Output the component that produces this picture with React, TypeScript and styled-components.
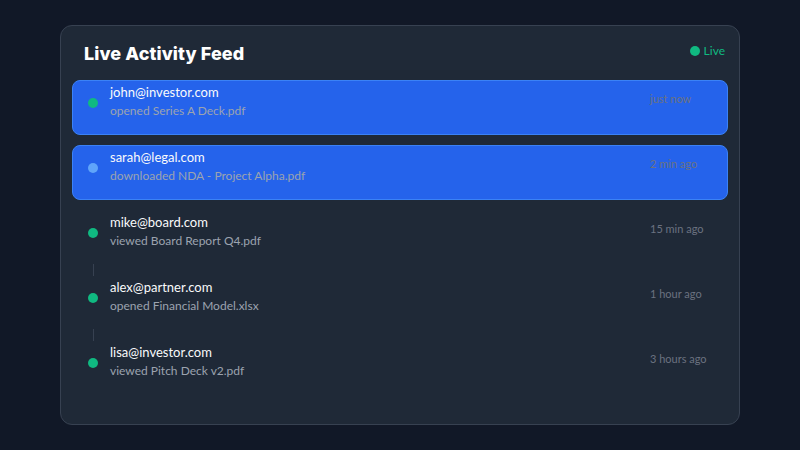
import React from "react";
import styled, { createGlobalStyle } from "styled-components";

const GlobalStyle = createGlobalStyle`
  html, body {
    margin: 0;
    padding: 0;
    background: #111827;
  }
  body {
    width: 800px;
    height: 450px;
    overflow: hidden;
    font-family: "Lato", "Liberation Sans", sans-serif;
  }
  * { box-sizing: border-box; }
`;

const Page = styled.div`
  width: 800px;
  height: 450px;
  padding-top: 25px;
  display: flex;
  justify-content: center;
  align-items: flex-start;
`;

const Card = styled.section`
  width: 680px;
  height: 400px;
  background: #1f2937;
  border: 1px solid #374151;
  border-radius: 12px;
  padding: 0 11px;
  display: flex;
  flex-direction: column;
`;

const Header = styled.header`
  height: 54px;
  padding: 17px 3px 0 12px;
  display: flex;
  justify-content: space-between;
  align-items: flex-start;
`;

const Title = styled.h2`
  margin: 0;
  font-family: "Inter", "Noto Sans", sans-serif;
  font-weight: 800;
  font-size: 18px;
  line-height: 22px;
  color: #ffffff;
  letter-spacing: 0.1px;
`;

const LiveBadge = styled.div`
  display: flex;
  align-items: center;
  gap: 4px;
  font-size: 12px;
  line-height: 16px;
  color: #10b981;
`;

const Dot = styled.span<{ $color: string; $size?: number }>`
  flex: none;
  display: block;
  width: ${(p) => p.$size ?? 10}px;
  height: ${(p) => p.$size ?? 10}px;
  border-radius: 50%;
  background: ${(p) => p.$color};
`;

const List = styled.ul`
  list-style: none;
  margin: 0;
  padding: 0;
  display: flex;
  flex-direction: column;
  gap: 10px;
`;

const Row = styled.li<{ $active: boolean; $connector: boolean }>`
  position: relative;
  height: 55px;
  display: flex;
  align-items: flex-start;
  padding: 4px 16px 0 15px;
  border-radius: 8px;
  border: 1px solid ${(p) => (p.$active ? "#3b82f6" : "transparent")};
  background: ${(p) => (p.$active ? "#2563eb" : "transparent")};

  &::after {
    content: "";
    display: ${(p) => (p.$connector ? "block" : "none")};
    position: absolute;
    left: 20px;
    top: 100%;
    width: 1px;
    height: 12px;
    background: #374151;
  }
`;

const RowDot = styled(Dot)`
  margin-top: 13px;
`;

const Info = styled.div`
  flex: 1;
  margin-left: 12px;
  display: flex;
  flex-direction: column;
`;

const Email = styled.div`
  font-size: 13px;
  line-height: 1.2;
  color: #f9fafb;
`;

const Action = styled.div`
  margin-top: 3px;
  font-size: 12px;
  line-height: 1.2;
  color: #9ca3af;
`;

const Time = styled.div`
  width: 61px;
  margin-top: 7px;
  font-size: 11px;
  line-height: 1.2;
  color: #6b7280;
  white-space: nowrap;
`;

type Item = { email: string; action: string; time: string; dot: string; active: boolean };

const items: Item[] = [
  { email: "john@investor.com", action: "opened Series A Deck.pdf", time: "just now", dot: "#10b981", active: true },
  { email: "sarah@legal.com", action: "downloaded NDA - Project Alpha.pdf", time: "2 min ago", dot: "#60a5fa", active: true },
  { email: "mike@board.com", action: "viewed Board Report Q4.pdf", time: "15 min ago", dot: "#10b981", active: false },
  { email: "alex@partner.com", action: "opened Financial Model.xlsx", time: "1 hour ago", dot: "#10b981", active: false },
  { email: "lisa@investor.com", action: "viewed Pitch Deck v2.pdf", time: "3 hours ago", dot: "#10b981", active: false },
];

export default function App() {
  return (
    <>
      <GlobalStyle />
      <Page>
        <Card>
          <Header>
            <Title>Live Activity Feed</Title>
            <LiveBadge>
              <Dot $color="#10b981" />
              Live
            </LiveBadge>
          </Header>
          <List>
            {items.map((it, i) => (
              <Row key={it.email} $active={it.active} $connector={!it.active && i < items.length - 1}>
                <RowDot $color={it.dot} />
                <Info>
                  <Email>{it.email}</Email>
                  <Action>{it.action}</Action>
                </Info>
                <Time>{it.time}</Time>
              </Row>
            ))}
          </List>
        </Card>
      </Page>
    </>
  );
}
